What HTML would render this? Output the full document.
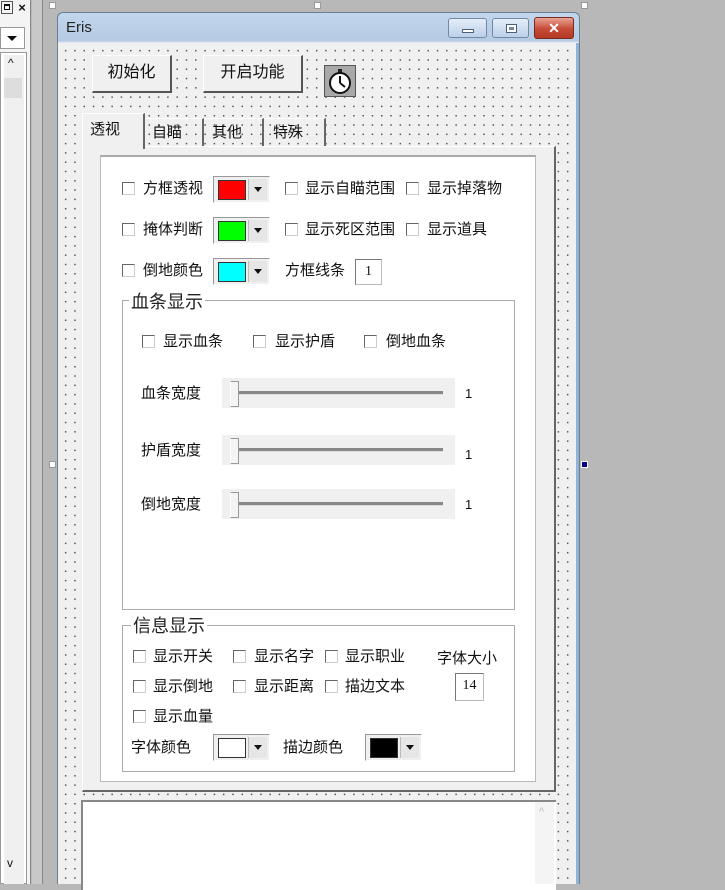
<!DOCTYPE html>
<html><head><meta charset="utf-8"><style>
*{margin:0;padding:0;box-sizing:border-box}
body{width:725px;height:884px;overflow:hidden;background:#b8b8b8;position:relative;font-family:"Liberation Sans","Noto Sans CJK SC",sans-serif;font-size:15px;color:#111}
.a{position:absolute}
.t{position:absolute;white-space:nowrap;line-height:18px}
.cb{position:absolute;width:13px;height:13px;border:1px solid #666;border-right-color:#ccc;border-bottom-color:#ccc;background:#fff}
.dots{background-color:#f0f0f0;background-image:radial-gradient(circle,#555 0.7px,transparent 1px);background-size:9.3px 9.3px;background-position:3px 3px}
.btn{position:absolute;background:#f0f0f0;border:1px solid #fff;border-right:2px solid #555;border-bottom:2px solid #555;text-align:center;font-size:16px}
.combo{position:absolute;width:57px;height:27px;background:#f0f0f0;border:1px solid #999;border-right-color:#fff;border-bottom-color:#fff}
.combo i{position:absolute;left:4px;top:3px;width:28px;height:20px;border:1px solid #333}
.combo b{position:absolute;right:2px;top:2px;width:19px;height:21px;background:#e6e6e6;border-left:1px solid #bbb}
.combo b:after{content:"";position:absolute;left:5px;top:8px;border:4px solid transparent;border-top:5px solid #111}
.edit{position:absolute;background:#fff;border:1px solid #bbb;border-top-color:#777;border-left-color:#777;font-family:"Liberation Serif",serif;font-size:14px;text-align:center;line-height:24px}
.grp{position:absolute;border:1px solid #aaa}
.gt{position:absolute;background:#fff;font-size:18px;padding:0 2px;line-height:20px;color:#222}
.sl{position:absolute;left:222px;width:233px;height:30px;background:#f0f0f0}
.sl:before{content:"";position:absolute;left:12px;right:12px;top:13px;height:3px;background:#888;border-bottom:1px solid #ddd}
.sl:after{content:"";position:absolute;left:8px;top:3px;width:7px;height:24px;background:#f4f4f4;border:1px solid #999;border-left-color:#fff}
.h{position:absolute;width:7px;height:7px;border:1px solid #999;background:#fff}
</style></head><body>
<div class="a" style="left:0;top:0;width:31px;height:884px;background:#f4f4f4;border-right:1px solid #888"></div>
<div class="a" style="left:1px;top:1px;width:12px;height:13px;border:1px solid #555"><div class="a" style="left:2px;top:2px;width:6px;height:6px;border:1px solid #111;border-top-width:2px"></div></div>
<div class="a" style="left:15px;top:0;width:14px;height:16px;font-size:13px;font-weight:bold;text-align:center">×</div>
<div class="a" style="left:0;top:27px;width:25px;height:22px;background:#fff;border:1px solid #999"></div>
<div class="a" style="left:7px;top:36px;border:5px solid transparent;border-top:5px solid #111"></div>
<div class="a" style="left:0;top:52px;width:27px;height:832px;background:#fff;border:1px solid #999"></div>
<div class="a" style="left:4px;top:55px;width:20px;height:829px;background:#f0f0f0"></div>
<div class="a" style="left:4px;top:78px;width:18px;height:20px;background:#ddd"></div>
<div class="a" style="left:8px;top:56px;font-size:12px">^</div>
<div class="a" style="left:7px;top:856px;font-size:12px">v</div>
<div class="a" style="left:32px;top:0;width:11px;height:884px;background:#c8c8c8;border-right:1px solid #888"></div>
<div class="a" style="left:44px;top:0;width:13px;height:884px;background:#b8b8b8"></div>
<div class="h" style="left:49px;top:2px"></div>
<div class="h" style="left:314px;top:2px"></div>
<div class="h" style="left:581px;top:2px"></div>
<div class="h" style="left:49px;top:461px"></div>
<div class="h" style="left:581px;top:461px;background:#00008b;border-color:#fff"></div>
<div class="a" style="left:57px;top:12px;width:523px;height:872px;border:1px solid #6a7f96;border-bottom:none;border-radius:6px 6px 0 0;background:linear-gradient(#c2d6ec,#b5cbe3 28px,#f0f0f0 30px)"></div>
<div class="t" style="left:66px;top:19px;font-size:15px;color:#222">Eris</div>
<div class="a" style="left:448px;top:18px;width:39px;height:20px;border:1px solid #7189a7;border-radius:3px;background:linear-gradient(#e4eef8,#bcd0e8)"><div class="a" style="left:13px;top:10px;width:12px;height:4px;background:#fff;border:1px solid #4a5f7c"></div></div>
<div class="a" style="left:492px;top:18px;width:37px;height:20px;border:1px solid #7189a7;border-radius:3px;background:linear-gradient(#e4eef8,#bcd0e8)"><div class="a" style="left:13px;top:5px;width:11px;height:9px;border:1px solid #4a5f7c;background:#fff"><div class="a" style="left:2px;top:2px;width:5px;height:3px;background:#7189a7"></div></div></div>
<div class="a" style="left:534px;top:17px;width:40px;height:22px;border:1px solid #7a2a1f;border-radius:3px;background:linear-gradient(#e8a496,#c74a36 55%,#b23a26);color:#fff;font-weight:bold;text-align:center;font-size:14px;line-height:20px">✕</div>
<div class="a dots" style="left:58px;top:43px;width:518px;height:841px"></div>
<div class="a" style="left:576px;top:43px;width:3px;height:841px;background:#8fb4d6"></div>
<div class="btn" style="left:92px;top:55px;width:80px;height:38px;line-height:34px">初始化</div>
<div class="btn" style="left:203px;top:55px;width:100px;height:38px;line-height:34px">开启功能</div>
<div class="a" style="left:324px;top:65px;width:32px;height:32px;background:#a8a8a8;border:1px solid #555"><svg width="30" height="30" viewBox="0 0 30 30"><rect x="13" y="3" width="4" height="4" fill="#222"/><circle cx="15" cy="17" r="10" fill="#fff" stroke="#111" stroke-width="2"/><path d="M15 17V10M15 17l5 4" stroke="#111" stroke-width="2" fill="none"/></svg></div>
<div class="a" style="left:82px;top:146px;width:474px;height:646px;background:#f0f0f0;border:1px solid #fff;border-right:2px solid #666;border-bottom:2px solid #666"></div>
<div class="a" style="left:145px;top:118px;width:59px;height:28px;border-right:2px solid #666;border-top:1px solid #fff"></div><div class="t" style="left:152px;top:124px">自瞄</div>
<div class="a" style="left:204px;top:118px;width:60px;height:28px;border-right:2px solid #666;border-top:1px solid #fff"></div><div class="t" style="left:212px;top:124px">其他</div>
<div class="a" style="left:264px;top:118px;width:62px;height:28px;border-right:2px solid #666;border-top:1px solid #fff"></div><div class="t" style="left:273px;top:124px">特殊</div>
<div class="a" style="left:82px;top:113px;width:63px;height:36px;background:#f0f0f0;border:1px solid #fff;border-right:2px solid #666;border-bottom:none"></div>
<div class="t" style="left:90px;top:121px">透视</div>
<div class="a" style="left:100px;top:155px;width:436px;height:627px;background:#fff;border:1px solid #bbb;border-top:2px solid #aaa"></div>
<div class="cb" style="left:122px;top:182px"></div><div class="t" style="left:143px;top:180px">方框透视</div>
<div class="combo" style="left:213px;top:176px"><i style="background:#f00"></i><b></b></div>
<div class="cb" style="left:285px;top:182px"></div><div class="t" style="left:305px;top:180px">显示自瞄范围</div>
<div class="cb" style="left:406px;top:182px"></div><div class="t" style="left:427px;top:180px">显示掉落物</div>
<div class="cb" style="left:122px;top:223px"></div><div class="t" style="left:143px;top:221px">掩体判断</div>
<div class="combo" style="left:213px;top:217px"><i style="background:#0f0"></i><b></b></div>
<div class="cb" style="left:285px;top:223px"></div><div class="t" style="left:305px;top:221px">显示死区范围</div>
<div class="cb" style="left:406px;top:223px"></div><div class="t" style="left:427px;top:221px">显示道具</div>
<div class="cb" style="left:122px;top:264px"></div><div class="t" style="left:143px;top:262px">倒地颜色</div>
<div class="combo" style="left:213px;top:258px"><i style="background:#0ff"></i><b></b></div>
<div class="t" style="left:285px;top:262px">方框线条</div>
<div class="edit" style="left:355px;top:259px;width:27px;height:26px">1</div>
<div class="grp" style="left:122px;top:300px;width:393px;height:310px"></div>
<div class="gt" style="left:129px;top:292px">血条显示</div>
<div class="cb" style="left:142px;top:335px"></div><div class="t" style="left:163px;top:333px">显示血条</div>
<div class="cb" style="left:253px;top:335px"></div><div class="t" style="left:275px;top:333px">显示护盾</div>
<div class="cb" style="left:364px;top:335px"></div><div class="t" style="left:386px;top:333px">倒地血条</div>
<div class="t" style="left:141px;top:385px">血条宽度</div><div class="sl" style="top:378px"></div><div class="t" style="left:465px;top:385px;font-size:13px">1</div>
<div class="t" style="left:141px;top:442px">护盾宽度</div><div class="sl" style="top:435px"></div><div class="t" style="left:465px;top:446px;font-size:13px">1</div>
<div class="t" style="left:141px;top:496px">倒地宽度</div><div class="sl" style="top:489px"></div><div class="t" style="left:465px;top:496px;font-size:13px">1</div>
<div class="grp" style="left:122px;top:625px;width:393px;height:147px"></div>
<div class="gt" style="left:131px;top:616px">信息显示</div>
<div class="cb" style="left:133px;top:650px"></div><div class="t" style="left:153px;top:648px">显示开关</div>
<div class="cb" style="left:233px;top:650px"></div><div class="t" style="left:254px;top:648px">显示名字</div>
<div class="cb" style="left:325px;top:650px"></div><div class="t" style="left:345px;top:648px">显示职业</div>
<div class="t" style="left:437px;top:650px">字体大小</div>
<div class="cb" style="left:133px;top:680px"></div><div class="t" style="left:153px;top:678px">显示倒地</div>
<div class="cb" style="left:233px;top:680px"></div><div class="t" style="left:254px;top:678px">显示距离</div>
<div class="cb" style="left:325px;top:680px"></div><div class="t" style="left:345px;top:678px">描边文本</div>
<div class="edit" style="left:455px;top:673px;width:29px;height:28px">14</div>
<div class="cb" style="left:133px;top:710px"></div><div class="t" style="left:153px;top:708px">显示血量</div>
<div class="t" style="left:131px;top:739px">字体颜色</div>
<div class="combo" style="left:213px;top:734px"><i style="background:#fff"></i><b></b></div>
<div class="t" style="left:283px;top:739px">描边颜色</div>
<div class="combo" style="left:365px;top:734px"><i style="background:#000"></i><b></b></div>
<div class="a" style="left:81px;top:800px;width:475px;height:90px;background:#fff;border-top:2px solid #888;border-left:2px solid #888"></div>
<div class="a" style="left:535px;top:802px;width:19px;height:82px;background:#f4f4f4"></div>
<div class="a" style="left:539px;top:806px;font-size:11px;color:#bbb">^</div>
</body></html>
